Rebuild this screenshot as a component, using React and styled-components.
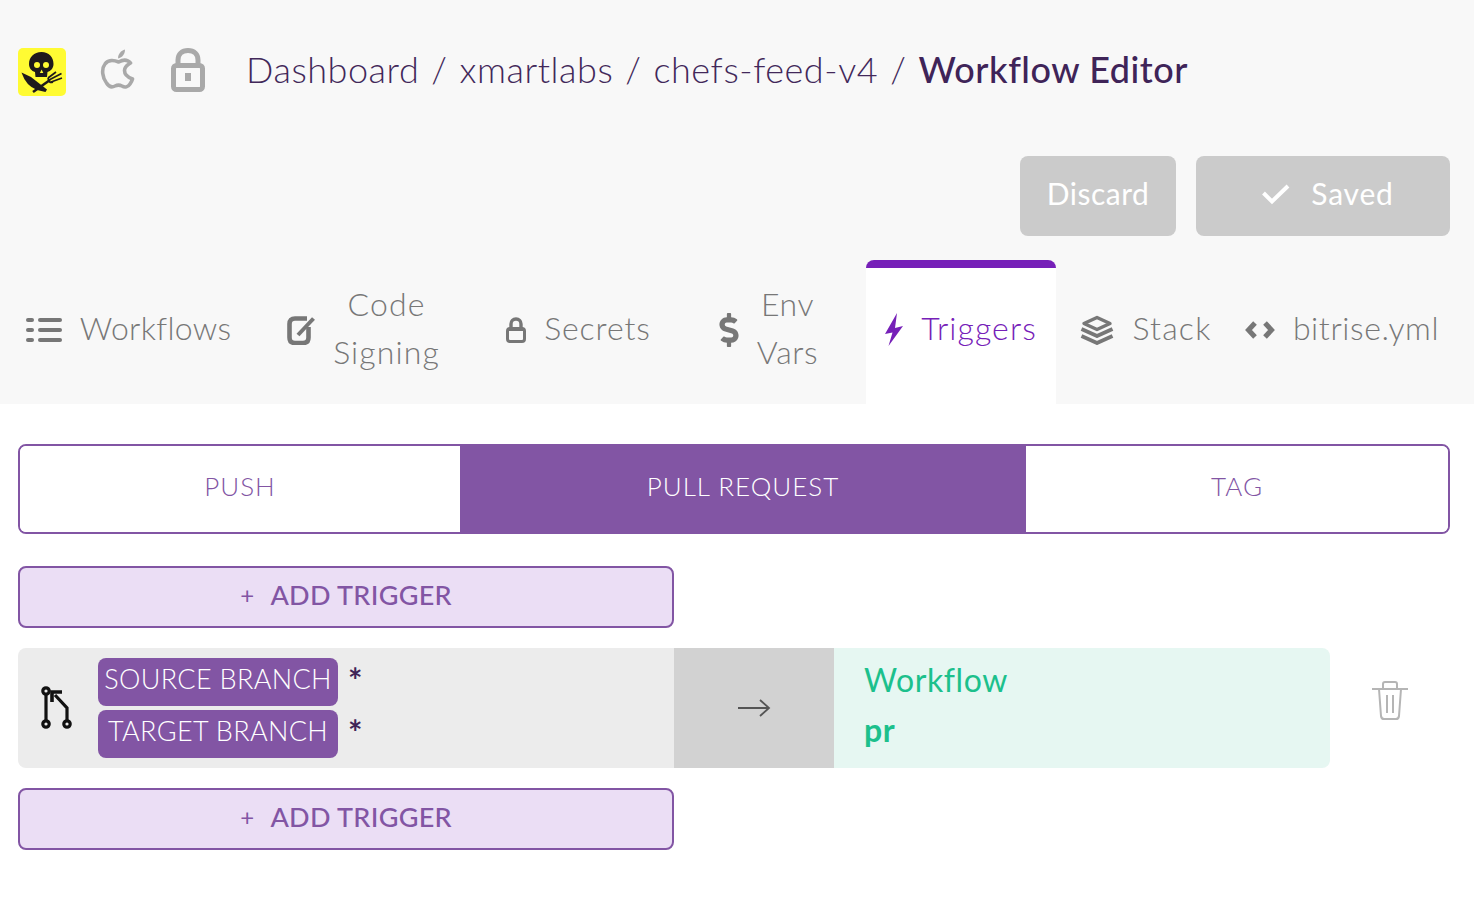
import React from 'react';
import styled, { createGlobalStyle } from 'styled-components';
import { FaDollarSign } from 'react-icons/fa';

const Global = createGlobalStyle`
    html, body { margin: 0; padding: 0; background: #fff; }
    body { font-family: Lato, "Liberation Sans", sans-serif; }
    * { box-sizing: border-box; }
`;

const TABS = [
    { width: 225, track: 0.3, lines: ['Workflows'], icon: <ListIcon /> },
    { width: 245, track: 1.1, lines: ['Code', 'Signing'], icon: <SignIcon /> },
    { width: 185, track: 0.9, lines: ['Secrets'], icon: <SmallLock /> },
    { width: 195, track: 0.6, lines: ['Env', 'Vars'], icon: <FaDollarSign size={34} style={{ width: 20 }} /> },
    { width: 190, track: 1.1, lines: ['Triggers'], icon: <BoltIcon />, active: true },
    { width: 180, track: 1.2, lines: ['Stack'], icon: <StackIcon /> },
    { width: 212, track: 0.6, lines: ['bitrise.yml'], icon: <CodeIcon /> },
];

function Logo() {
    return (
        <svg width="48" height="48" viewBox="0 0 48 48">
            <rect width="48" height="48" rx="5" fill="#fffb33" />
            <path d="M3.5 24.5 L13 29 L29 41.5 L27.5 44 L19 42 Q8 38 3.5 24.5Z" fill="#1e1a1c" />
            <path d="M15 44 L32 32" stroke="#1e1a1c" strokeWidth="2.6" fill="none" />
            <path d="M31 32 L43.5 25.5 M33 34 L44 30 M30 30 L38 24 M30 30 Q31 36 35 34" stroke="#1e1a1c" strokeWidth="1.7" fill="none" />
            <path d="M23.5 4 C16 4 11 9 11 16 C11 20 13.5 23 17 24 L17.5 29 L29 29 L29.5 24 C33 23 35.5 20 35.5 16 C35.5 9 31 4 23.5 4Z" fill="#1e1a1c" />
            <circle cx="19" cy="17" r="3" fill="#fffb33" />
            <circle cx="28" cy="17" r="3" fill="#fffb33" />
            <path d="M23.6 21.5 L25.3 25 L21.9 25Z" fill="#fffb33" />
        </svg>
    );
}

function AppleIcon() {
    return (
        <svg width="36" height="42" viewBox="0 0 36 42" fill="none">
            <path d="M18.7 14 C14 12 8 11.5 5 16 C1 21 2.5 30 6.5 35 C9 39 12 39.5 15 38 C17 37 20 37 22 38 C25 40 28 39 30 36 C31 34.5 32 33 32.5 31 C27 29 24.5 26 24.5 22.5 C24.5 19 27 17 30.5 15 C27.5 11.5 23 11.5 18.7 14Z" stroke="#a9a9a9" strokeWidth="3.6" strokeLinejoin="round" />
            <path d="M18 10.5 C18 6 21 2.5 25 1.5 C25 6 22.5 9.5 18 10.5Z" fill="#a9a9a9" />
        </svg>
    );
}

function BigLock() {
    return (
        <svg width="36" height="44" viewBox="0 0 36 44" fill="none">
            <path d="M8 17 V12 C8 6 12 2.5 18 2.5 C24 2.5 28 6 28 12 V17" stroke="#a9a9a9" strokeWidth="5" />
            <rect x="3.5" y="17.5" width="29" height="24" rx="3" stroke="#a9a9a9" strokeWidth="5" />
            <rect x="15" y="25" width="6" height="8" fill="#a9a9a9" />
        </svg>
    );
}

function ListIcon() {
    return (
        <svg width="36" height="24" viewBox="0 0 36 24" fill="#777">
            <rect x="0" y="0" width="8" height="4" rx="2" />
            <rect x="12" y="0" width="24" height="4" rx="2" />
            <rect x="0" y="10" width="8" height="4" rx="2" />
            <rect x="12" y="10" width="24" height="4" rx="2" />
            <rect x="0" y="20" width="8" height="4" rx="2" />
            <rect x="12" y="20" width="24" height="4" rx="2" />
        </svg>
    );
}

function SignIcon() {
    return (
        <svg width="28" height="30" viewBox="0 0 28 30" fill="none">
            <path d="M20 3.5 H8 Q2.5 3.5 2.5 9 V22.5 Q2.5 28 8 28 H16 Q21.5 28 21.5 22.5 V12" stroke="#777" strokeWidth="4.6" />
            <path d="M11 20 L26.5 3.5" stroke="#777" strokeWidth="4" />
        </svg>
    );
}

function SmallLock() {
    return (
        <svg width="20" height="26" viewBox="0 0 20 26" fill="none">
            <path d="M5 11 V7 C5 4 7 2 10 2 C13 2 15 4 15 7 V11" stroke="#777" strokeWidth="3.4" />
            <rect x="1.5" y="11.5" width="17" height="13" rx="2.5" stroke="#777" strokeWidth="3" />
            <rect x="3" y="10" width="14" height="4" fill="#777" />
        </svg>
    );
}

function BoltIcon() {
    return (
        <svg width="18" height="34" viewBox="0 0 18 34" fill="#7620b8">
            <path d="M12 0 L0 21 L7.5 19.5 L3.5 33 L18 13 L10 15 Z" />
        </svg>
    );
}

function StackIcon() {
    return (
        <svg width="34" height="30" viewBox="0 0 34 30" fill="none" stroke="#777" strokeLinejoin="round">
            <path d="M17 2.5 L30 8.5 L17 14.5 L4 8.5 Z" strokeWidth="3.4" />
            <path d="M1.5 14 L17 21 L32.5 14" strokeWidth="3.8" />
            <path d="M1.5 21 L17 28 L32.5 21" strokeWidth="3.8" />
        </svg>
    );
}

function CodeIcon() {
    return (
        <svg width="30" height="18" viewBox="0 0 30 18" fill="none" stroke="#777" strokeWidth="5">
            <path d="M10 2 L3.5 9 L10 16" />
            <path d="M20 2 L26.5 9 L20 16" />
        </svg>
    );
}

function CheckIcon() {
    return (
        <svg width="28" height="22" viewBox="0 0 28 22" fill="none" stroke="#fff" strokeWidth="4">
            <path d="M1.5 10 L10 18.5 L26 3" />
        </svg>
    );
}

function PrIcon() {
    return (
        <svg width="36" height="46" viewBox="0 0 36 46" fill="none" stroke="#111" strokeWidth="3.2">
            <circle cx="6" cy="6" r="3.2" />
            <circle cx="6" cy="39" r="3.2" />
            <circle cx="27" cy="39" r="3.2" />
            <path d="M6 10 V35" />
            <path d="M27 35 V23 L15 10" />
            <path d="M12 17 V7 H22" strokeWidth="3.6" />
        </svg>
    );
}

function ArrowIcon() {
    return (
        <svg width="34" height="20" viewBox="0 0 34 20" fill="none" stroke="#555" strokeWidth="1.8">
            <path d="M1 10 H32 M23 2 L32 10 L23 18" />
        </svg>
    );
}

function TrashIcon() {
    return (
        <svg width="36" height="40" viewBox="0 0 36 40" fill="none" stroke="#b5b5b5" strokeWidth="2">
            <path d="M0 8 H36" />
            <path d="M11 8 V3 Q11 1 13 1 H23 Q25 1 25 3 V8" />
            <path d="M7 8 L9 35 Q9.4 38 12 38 H24 Q26.6 38 27 35 L29 8" />
            <path d="M15 14 V32 M21 14 V32" />
        </svg>
    );
}

const App = () => (
    <>
        <Global />
        <Header>
            <TopRow>
                <Logo />
                <StatusIcons>
                    <AppleIcon />
                    <BigLock />
                </StatusIcons>
                <Crumbs>
                    <span>Dashboard</span><Slash>/</Slash>
                    <span>xmartlabs</span><Slash>/</Slash>
                    <span>chefs-feed-v4</span><Slash>/</Slash>
                    <Current>Workflow Editor</Current>
                </Crumbs>
            </TopRow>
            <Actions>
                <GreyButton $width={156} $track={0.5}>Discard</GreyButton>
                <GreyButton $width={254} $track={0.8} $indent={10}><CheckIcon />Saved</GreyButton>
            </Actions>
            <Tabs>
                {TABS.map(tab => (
                    <Tab key={tab.lines[0]} $width={tab.width} $track={tab.track} $active={tab.active}>
                        {tab.icon}
                        <TabLabel>
                            {tab.lines.map(line => <div key={line}>{line}</div>)}
                        </TabLabel>
                    </Tab>
                ))}
            </Tabs>
        </Header>
        <Content>
            <Segments>
                <Segment $width={440}>PUSH</Segment>
                <Segment $width={566} $active>PULL REQUEST</Segment>
                <Segment $width={422}>TAG</Segment>
            </Segments>
            <AddTrigger><Plus>+</Plus>ADD TRIGGER</AddTrigger>
            <TriggerLine>
                <TriggerRow>
                    <Conditions>
                        <PrIcon />
                        <Branches>
                            <BranchLine><Pill>SOURCE BRANCH</Pill><Star>*</Star></BranchLine>
                            <BranchLine><Pill>TARGET BRANCH</Pill><Star>*</Star></BranchLine>
                        </Branches>
                    </Conditions>
                    <ArrowCell><ArrowIcon /></ArrowCell>
                    <Target>
                        <div>Workflow</div>
                        <TargetName>pr</TargetName>
                    </Target>
                </TriggerRow>
                <TrashSlot><TrashIcon /></TrashSlot>
            </TriggerLine>
            <AddTrigger><Plus>+</Plus>ADD TRIGGER</AddTrigger>
        </Content>
    </>
);

export default App;

// Style
const Header = styled.div`
    background: #f8f8f8;
    height: 404px;
    padding-top: 48px;
`;

const TopRow = styled.div`
    display: flex;
    align-items: center;
    height: 48px;
    padding-left: 18px;
`;

const StatusIcons = styled.div`
    display: flex;
    align-self: flex-start;
    align-items: flex-start;
    gap: 34px;
    margin-left: 34px;
`;

const Crumbs = styled.div`
    display: flex;
    align-items: center;
    margin-left: 40px;
    padding-bottom: 7px;
    font-size: 36px;
    font-weight: 300;
    letter-spacing: 0.55px;
    color: #42285a;
`;

const Slash = styled.span`
    margin: 0 12px;
`;

const Current = styled.span`
    font-weight: 500;
    color: #3f2458;
`;

const Actions = styled.div`
    display: flex;
    justify-content: flex-end;
    gap: 20px;
    margin-top: 60px;
    padding-right: 24px;
`;

const GreyButton = styled.div`
    display: flex;
    align-items: center;
    justify-content: center;
    gap: 21px;
    width: ${p => p.$width}px;
    height: 80px;
    padding: 0 0 6px ${p => p.$indent || 0}px;
    background: #cbcbcb;
    border-radius: 8px;
    color: #fff;
    font-size: 30px;
    letter-spacing: ${p => p.$track}px;
    svg { margin-top: 2px; }
`;

const Tabs = styled.div`
    display: flex;
    margin-top: 24px;
    padding-left: 16px;
    height: 144px;
`;

const Tab = styled.div`
    display: flex;
    align-items: center;
    justify-content: center;
    gap: 18px;
    width: ${p => p.$width}px;
    padding-bottom: ${p => (p.$active ? 16 : 8)}px;
    color: ${p => (p.$active ? '#7620b8' : '#777')};
    background: ${p => (p.$active ? '#fff' : 'transparent')};
    border-top: ${p => (p.$active ? '8px solid #7620b8' : '0')};
    border-radius: 8px 8px 0 0;
    font-size: 32px;
    font-weight: 300;
    letter-spacing: ${p => p.$track}px;
    flex-shrink: 0;
    svg { margin-top: 4px; }
`;

const TabLabel = styled.div`
    text-align: center;
    line-height: 48px;
`;

const Content = styled.div`
    padding: 40px 24px 0 18px;
`;

const Segments = styled.div`
    display: flex;
    height: 90px;
    border: 2px solid #8255a4;
    border-radius: 8px;
    overflow: hidden;
`;

const Segment = styled.div`
    display: flex;
    align-items: center;
    justify-content: center;
    width: ${p => p.$width}px;
    padding-bottom: 6px;
    background: ${p => (p.$active ? '#8255a4' : '#fff')};
    color: ${p => (p.$active ? '#fff' : '#8255a4')};
    font-size: 26px;
    font-weight: 300;
    letter-spacing: 1px;
`;

const AddTrigger = styled.div`
    display: flex;
    align-items: center;
    justify-content: center;
    gap: 16px;
    width: 656px;
    height: 62px;
    margin-top: 32px;
    padding-bottom: 6px;
    background: #ebdef5;
    border: 2px solid #8255a4;
    border-radius: 8px;
    color: #8255a4;
    font-size: 27px;
    font-weight: 500;
    letter-spacing: 0.3px;
    & + div { margin-top: 20px; }
`;

const Plus = styled.span`
    font-size: 24px;
    font-weight: 400;
`;

const TriggerLine = styled.div`
    display: flex;
    align-items: center;
    gap: 42px;
    margin-bottom: 20px;
    & + div { margin-top: 0; }
`;

const TrashSlot = styled.div`
    display: flex;
    margin-bottom: 14px;
`;

const TriggerRow = styled.div`
    display: grid;
    grid-template-columns: 656px 160px 496px;
    height: 120px;
    border-radius: 8px;
    overflow: hidden;
`;

const Conditions = styled.div`
    display: flex;
    align-items: center;
    gap: 22px;
    padding-left: 22px;
    background: #ececec;
`;

const Branches = styled.div`
    display: flex;
    flex-direction: column;
    gap: 4px;
`;

const BranchLine = styled.div`
    display: flex;
    gap: 10px;
`;

const Pill = styled.div`
    display: flex;
    align-items: center;
    justify-content: center;
    width: 240px;
    height: 48px;
    padding-bottom: 8px;
    background: #8255a4;
    border-radius: 8px;
    color: #fff;
    font-size: 27px;
    font-weight: 300;
    letter-spacing: 0.35px;
`;

const Star = styled.span`
    margin-top: 2px;
    color: #3f2458;
    font-size: 34px;
    font-weight: 700;
    line-height: 40px;
`;

const ArrowCell = styled.div`
    display: flex;
    align-items: center;
    justify-content: center;
    background: #d2d2d2;
`;

const Target = styled.div`
    display: flex;
    flex-direction: column;
    justify-content: center;
    padding: 0 0 6px 30px;
    background: #e6f7f2;
    color: #1cc08c;
    font-size: 32px;
    line-height: 50px;
    letter-spacing: 0.6px;
`;

const TargetName = styled.div`
    font-weight: 700;
`;
